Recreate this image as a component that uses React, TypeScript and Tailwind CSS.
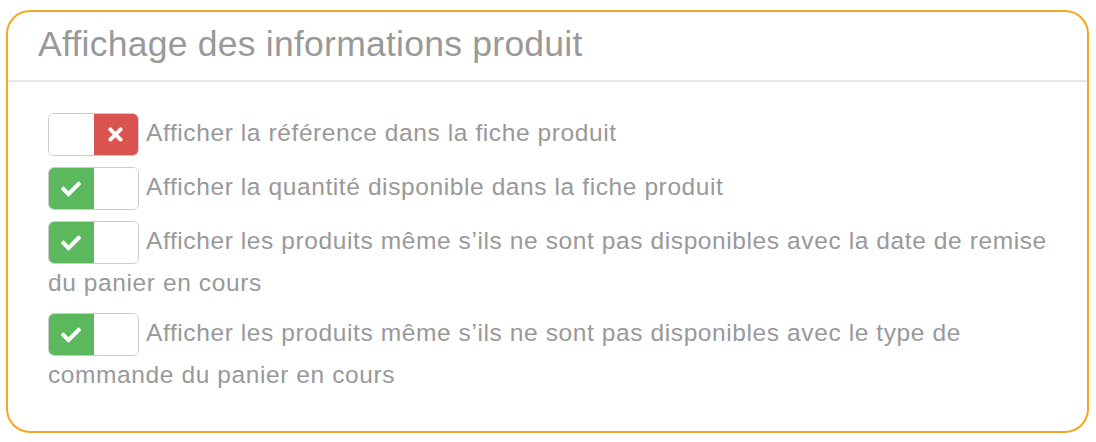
import React from "react";
import { FaCheck, FaTimes } from "react-icons/fa";

function Toggle({ on }: { on: boolean }) {
  return (
    <span className="inline-flex align-middle w-[91px] h-[43px] border-[1.5px] border-[#cccccc] rounded-[6px] overflow-hidden mr-[7px] box-border bg-white tracking-normal">
      {on ? (
        <>
          <span className="w-1/2 h-full bg-[#5cb85c] flex items-center justify-center text-white">
            <FaCheck size={20} />
          </span>
          <span className="w-1/2 h-full bg-white" />
        </>
      ) : (
        <>
          <span className="w-1/2 h-full bg-white" />
          <span className="w-1/2 h-full bg-[#d9534f] flex items-center justify-center text-white">
            <FaTimes size={21} />
          </span>
        </>
      )}
    </span>
  );
}

const rows: { on: boolean; text: string }[] = [
  { on: false, text: "Afficher la référence dans la fiche produit" },
  { on: true, text: "Afficher la quantité disponible dans la fiche produit" },
  {
    on: true,
    text: "Afficher les produits même s’ils ne sont pas disponibles avec la date de remise du panier en cours",
  },
  {
    on: true,
    text: "Afficher les produits même s’ils ne sont pas disponibles avec le type de commande du panier en cours",
  },
];

export default function App() {
  return (
    <div className="w-[1096px] h-[442px] bg-white pt-[10px] pl-[6px] font-['Liberation_Sans',Arial,sans-serif] text-[#999999]">
      <div className="w-[1083px] h-[423px] border-2 border-[#f5a623] rounded-[24px] overflow-hidden box-border">
        <div className="pt-[12px] pb-[15px] pl-[30px] border-b-2 border-[#e8e8e8]">
          <h2 className="text-[35.5px] leading-[41px] font-normal tracking-[0.25px]">Affichage des informations produit</h2>
        </div>
        <div className="pt-[31px] pl-[40px] pr-[20px]">
          {rows.map((r, i) => (
            <div key={i} className="mb-[11px] text-[24.5px] leading-[38px] tracking-[0.6px]">
              <Toggle on={r.on} />
              {r.text}
            </div>
          ))}
        </div>
      </div>
    </div>
  );
}
